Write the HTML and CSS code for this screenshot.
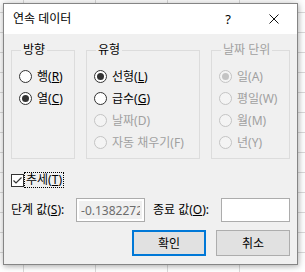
FILE: index.html
```html
<!DOCTYPE html>
<html lang="ko">
<head>
    <meta charset="UTF-8">
    <title>연속 데이터</title>
    <link rel="stylesheet" href="styles.css">
</head>
<body>
    <div class="dialog">
        <div class="titlebar">
            <span class="title">연속 데이터</span>
            <span class="caption-btn">?</span>
            <span class="caption-btn">
                <svg width="10" height="10" viewBox="0 0 10 10"><path d="M0.5 0.5 L9.5 9.5 M9.5 0.5 L0.5 9.5" stroke="#111" stroke-width="1" fill="none"/></svg>
            </span>
        </div>

        <div class="content">
            <div class="groups">
                <fieldset class="group group-dir">
                    <legend>방향</legend>
                    <label class="radio"><span class="dot"></span><span>행(<u>R</u>)</span></label>
                    <label class="radio"><span class="dot on"></span><span>열(<u>C</u>)</span></label>
                </fieldset>

                <fieldset class="group group-type">
                    <legend>유형</legend>
                    <label class="radio"><span class="dot on"></span><span>선형(<u>L</u>)</span></label>
                    <label class="radio"><span class="dot"></span><span>급수(<u>G</u>)</span></label>
                    <label class="radio off"><span class="dot"></span><span>날짜(D)</span></label>
                    <label class="radio off"><span class="dot"></span><span>자동 채우기(F)</span></label>
                </fieldset>

                <fieldset class="group group-unit off">
                    <legend>날짜 단위</legend>
                    <label class="radio off"><span class="dot on"></span><span>일(A)</span></label>
                    <label class="radio off"><span class="dot"></span><span>평일(W)</span></label>
                    <label class="radio off"><span class="dot"></span><span>월(M)</span></label>
                    <label class="radio off"><span class="dot"></span><span>년(Y)</span></label>
                </fieldset>
            </div>

            <div class="trend">
                <span class="check">
                    <svg width="11" height="11" viewBox="0 0 11 11"><path d="M1.5 5.5 L4 8 L9.5 2.5" stroke="#333" stroke-width="1.2" fill="none"/></svg>
                </span>
                <span class="focus">추세(<u>T</u>)</span>
            </div>

            <div class="values">
                <span class="val-label step-label">단계 값(<u>S</u>):</span>
                <input class="field field-off" type="text" value="-0.1382272" disabled>
                <span class="val-label stop-label">종료 값(<u>O</u>):</span>
                <input class="field" type="text" value="">
            </div>

            <div class="buttons">
                <button class="btn btn-default">확인</button>
                <button class="btn">취소</button>
            </div>
        </div>
    </div>
</body>
</html>
```

FILE: styles.css
```css
body {
    margin: 0;
    width: 305px;
    height: 272px;
    overflow: hidden;
    font-family: "Noto Sans", "Noto Sans CJK KR", sans-serif;
    font-size: 12px;
    color: #000;
    background-color: #fff;
    /* spreadsheet grid behind the dialog */
    background-image:
        linear-gradient(to right, #dadada 1px, transparent 1px),
        linear-gradient(to bottom, #dadada 1px, transparent 1px);
    background-size: 72px 100%, 100% 20px;
    background-position: 23px 0, 0 12px;
    position: relative;
}

/* Dialog window */
.dialog {
    position: absolute;
    left: 3px;
    top: 3px;
    width: 295px;
    box-sizing: border-box;
    border: 1px solid #858585;
    background: #f0f0f0;
    box-shadow: 0 0 9px rgba(0, 0, 0, 0.22), 1px 2px 4px rgba(0, 0, 0, 0.15);
}

.titlebar {
    height: 30px;
    display: flex;
    align-items: center;
    background: #fff;
}

.title {
    flex: 1;
    padding-left: 9px;
    line-height: 16px;
}

.caption-btn {
    width: 46px;
    height: 30px;
    display: flex;
    align-items: center;
    justify-content: center;
    font-size: 13px;
}

.content {
    padding: 8px 7px 8px 7px;
}

/* Group boxes */
.groups {
    display: flex;
    gap: 11px;
    height: 117px;
}

.group {
    margin: 0;
    padding: 7px 0 0 7px;
    border: 1px solid #dcdcdc;
    box-sizing: border-box;
    min-width: 0;
}

.group legend {
    margin-left: 2px;
    padding: 0 2px;
    line-height: 16px;
}

.group-dir { width: 64px; }
.group-type { width: 114px; }
.group-unit { width: 79px; }

.group.off legend { color: #a0a0a0; }

.radio {
    display: flex;
    align-items: center;
    gap: 5px;
    height: 22px;
    white-space: nowrap;
}

.radio.off { color: #a0a0a0; }

.dot {
    width: 13px;
    height: 13px;
    box-sizing: border-box;
    border: 1px solid #333;
    border-radius: 50%;
    background: #fff;
    display: flex;
    align-items: center;
    justify-content: center;
    flex-shrink: 0;
}

.dot.on::after {
    content: "";
    width: 7px;
    height: 7px;
    border-radius: 50%;
    background: #333;
}

.radio.off .dot {
    border-color: #c4c4c4;
    background: #f4f4f4;
}

.radio.off .dot.on::after { background: #c4c4c4; }

/* Trend checkbox */
.trend {
    margin-top: 13px;
    height: 16px;
    display: flex;
    align-items: center;
    gap: 1px;
}

.check {
    width: 13px;
    height: 13px;
    box-sizing: border-box;
    border: 1px solid #333;
    background: #fff;
    display: flex;
    align-items: center;
    justify-content: center;
}

.focus {
    line-height: 14px;
    padding: 0 1px;
    outline: 1px dotted #000;
}

/* Step / stop values */
.values {
    margin-top: 10px;
    display: flex;
    align-items: center;
    height: 24px;
}

.val-label { line-height: 16px; white-space: nowrap; }
.step-label { width: 66px; }
.stop-label { width: 69px; margin-left: 8px; }

.field {
    width: 69px;
    height: 24px;
    box-sizing: border-box;
    margin: 0;
    padding: 0 4px;
    border: 1px solid #acacac;
    background: #fff;
    font-family: inherit;
    font-size: 12px;
    outline: none;
}

.field-off {
    color: #6d6d6d;
    background: #f0f0f0;
    box-shadow: inset 0 0 0 2px #fff;
}

/* Buttons */
.buttons {
    margin-top: 8px;
    display: flex;
    justify-content: flex-end;
    gap: 10px;
}

.btn {
    width: 74px;
    height: 26px;
    box-sizing: border-box;
    border: 1px solid #adadad;
    background: #e1e1e1;
    font-family: inherit;
    font-size: 12px;
    color: #000;
    padding: 0;
}

.btn-default { border: 2px solid #0078d7; }
```
